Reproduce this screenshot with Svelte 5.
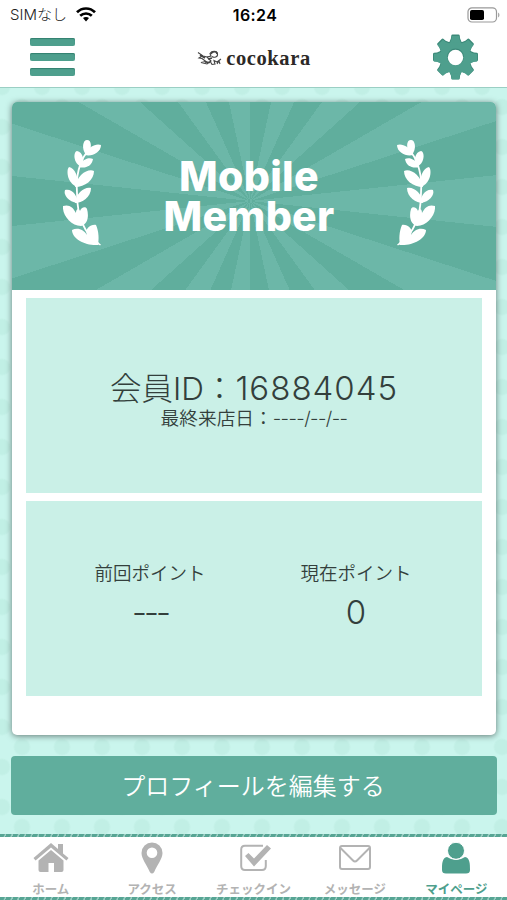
<script lang="ts">
  // 下部タブ
  const tabs = [
    { id: 'home', label: 'ホーム' },
    { id: 'access', label: 'アクセス' },
    { id: 'checkin', label: 'チェックイン' },
    { id: 'message', label: 'メッセージ' },
    { id: 'mypage', label: 'マイページ' },
  ];

  let activeTab = $state('mypage');
  let memberId = $state('16884045');
  let lastVisit = $state('----/--/--');
  let previousPoint = $state('---');
  let currentPoint = $state('0');

  // 歯車の歯の角度
  const teeth = [0, 45, 90, 135, 180, 225, 270, 315];
</script>

{#snippet laurel()}
  <svg class="laurel" viewBox="0 0 39 106" width="39" height="106" fill="#fff">
    <path d="M24 12C15 24 13 39 14 53C14 76 20 93 36 104" fill="none" stroke="#fff" stroke-width="1.8" />
    <path d="M23 15C18 8 20 0 24 0C29 0 29 8 25 15Z" />
    <path d="M22 15C25 6 34 3 38 5C38 12 29 17 22 15Z" />
    <path d="M19 27C10 24 10 12 14 11C20 12 22 21 19 27Z" />
    <path d="M16 27C19 19 26 17 30 19C29 26 22 29 16 27Z" />
    <path d="M14 47C4 43 3 30 6 27C12 28 16 37 14 47Z" />
    <path d="M12 47C14 35 25 28 31 31C31 40 22 47 12 47Z" />
    <path d="M14 63C6 62 0 55 2 50C9 48 15 56 14 63Z" />
    <path d="M12 63C13 53 22 46 28 48C28 57 19 63 12 63Z" />
    <path d="M18 86C8 86-1 75 0 66C6 64 10 67 13 73C13 69 15 68 17 71C18 67 23 66 24 69C26 76 25 84 18 86Z" />
    <path d="M35 105C23 106 9 99 9 90C15 87 21 90 24 95C21 89 28 84 33 85C36 92 36 99 35 105Z" />
    <path d="M33 102L37.5 105" stroke="#fff" stroke-width="1.5" />
  </svg>
{/snippet}

<div class="app">
  <div class="status-bar">
    <div class="carrier">
      <span>SIMなし</span>
      <svg width="20" height="15" viewBox="0 0 20 15" fill="none" stroke="#000" stroke-width="2.7">
        <path d="M1 5.3C6 .2 14 .2 19 5.3" />
        <path d="M4.2 8.8C7.5 5.7 12.5 5.7 15.8 8.8" />
        <path d="M7 11L10 14.4L13 11C11.4 9.6 8.6 9.6 7 11Z" fill="#000" stroke="none" />
      </svg>
    </div>
    <span class="time">16:24</span>
    <svg class="battery" width="33" height="16" viewBox="0 0 33 16">
      <rect x="1" y=".8" width="28.5" height="14.2" rx="4" fill="#fff" stroke="#999" stroke-width="1.2" />
      <rect x="3" y="3" width="14" height="10" rx="1.8" />
      <path d="M31 5.5C33 6.5 33 9.5 31 10.5Z" fill="#aaa" />
    </svg>
  </div>

  <header>
    <button class="menu-btn" aria-label="メニュー">
      <i></i><i></i><i></i>
    </button>
    <div class="logo">
      <svg width="25" height="17" viewBox="0 0 25 17" fill="none" stroke="#444" stroke-width="1.1">
        <path d="M1 2.5L6 6L10 7L14 11L10 14L4 12.5L9 11.5L5 8.5L2 8L5 6" />
        <path d="M10 7L14 6L13 3.5C15 .5 20 .5 20.5 4C21 7 17 8 15 6.5" />
        <path d="M13 11L15 14.5L18 14L17 10.5L20 12L24 9M20 14L22 11L23 14" />
        <path d="M14 4C15 1 20 1 20 4" stroke-width="1.7" />
        <path d="M3 5L8 8M8 12L13 12.5M11 9L15 8" stroke-width="1.6" />
      </svg>
      <span>cocokara</span>
    </div>
    <button class="settings-btn" aria-label="設定">
      <svg width="45" height="46" viewBox="-22.5 -23 45 46">
        <g fill="#3c8979">
          {#each teeth as deg (deg)}
            <path d="M-6.5-14L-4.6-18.5L-4.2-21.5Q-4-22.5-3-22.5H3Q4-22.5 4.2-21.5L4.6-18.5L6.5-14Z" transform="rotate({deg})" />
          {/each}
          <circle r="16" />
        </g>
        <g fill="#4e9f8d" transform="translate(0 .7)">
          {#each teeth as deg (deg)}
            <path d="M-6-14L-4.2-18L-3.8-21.6H3.8L4.2-18L6-14Z" transform="rotate({deg})" />
          {/each}
          <circle r="15.6" />
        </g>
        <circle r="8.4" fill="#3c8979" />
        <circle cy=".5" r="7.7" fill="#fff" />
      </svg>
    </button>
  </header>

  <main>
    <section class="card">
      <div class="banner">
        {@render laurel()}
        <h1>Mobile<br />Member</h1>
        <div class="flip">{@render laurel()}</div>
      </div>
      <div class="panel member">
        <p class="member-id">会員ID：<span>{memberId}</span></p>
        <p class="last-visit">最終来店日：<span>{lastVisit}</span></p>
      </div>
      <div class="panel points">
        <div class="point">
          <span>前回ポイント</span>
          <strong>{previousPoint}</strong>
        </div>
        <div class="point">
          <span>現在ポイント</span>
          <strong>{currentPoint}</strong>
        </div>
      </div>
    </section>

    <button class="edit-btn">プロフィールを編集する</button>
  </main>

  <nav>
    {#each tabs as tab (tab.id)}
      <button class="tab" class:active={activeTab === tab.id} onclick={() => (activeTab = tab.id)}>
        <svg width="36" height="34" viewBox="0 0 36 34" fill="currentColor">
          {#if tab.id === 'home'}
            <path d="M18 1L25 7V2H30V11.5L35.5 16L33.5 18.5L18 5.5L2.5 18.5L.5 16Z" />
            <path d="M18 8L30.5 18.5V28Q30.5 30 28.5 30H21V21H15.5V30H7.5Q5.5 30 5.5 28V18.5Z" />
          {:else if tab.id === 'access'}
            <path
              fill-rule="evenodd"
              d="M18 .5A10.5 10.5 0 0 0 7.5 11C7.5 17 13 23 15.8 30Q18 33 20.2 30C23 23 28.5 17 28.5 11A10.5 10.5 0 0 0 18 .5ZM18 5.5A5.3 5.3 0 1 1 18 16.1A5.3 5.3 0 1 1 18 5.5Z"
            />
          {:else if tab.id === 'checkin'}
            <path d="M27 3.7H9Q5.2 3.7 5.2 7.5V24Q5.2 28 9 28H26Q29.8 28 29.8 24V18" fill="none" stroke="currentColor" stroke-width="2" />
            <path d="M9 14L12.5 11L18 16.5L31 3L35 6.5L18 24.5Z" />
          {:else if tab.id === 'message'}
            <rect x="3" y="4" width="30" height="23" rx="2" fill="none" stroke="currentColor" stroke-width="2" />
            <path d="M3.5 6L16 18.5Q18 20.5 20 18.5L32.5 6" fill="none" stroke="currentColor" stroke-width="2" />
          {:else}
            <path d="M9 15C4 16 4 22 4 28Q4 31.5 8 31.5H28Q32 31.5 32 28C32 22 32 16 27 15Q18 21 9 15Z" />
            <circle cx="18" cy="8.8" r="8.5" stroke="#fff" stroke-width="1" />
          {/if}
        </svg>
        <span>{tab.label}</span>
      </button>
    {/each}
  </nav>
</div>

<style>
  :global(body) {
    margin: 0;
    font-family: Inter, 'Noto Sans CJK JP', sans-serif;
  }

  button {
    padding: 0;
    border: none;
    background: none;
    font-family: inherit;
    cursor: pointer;
  }

  p,
  h1 {
    margin: 0;
  }

  .app {
    width: 507px;
    height: 900px;
    display: flex;
    flex-direction: column;
    overflow: hidden;
    background-color: #caf5ed;
    background-image:
      radial-gradient(circle, #c1efe5 7px, transparent 9px),
      radial-gradient(circle, #c1efe5 7px, transparent 9px);
    background-size: 40px 40px;
    background-position:
      2px 7px,
      -18px 27px;
  }

  .status-bar {
    height: 29px;
    display: grid;
    grid-template-columns: 1fr auto 1fr;
    align-items: center;
    padding: 0 7px 0 10px;
    background: #fff;
    box-sizing: border-box;
    font-size: 15px;
    color: #222;
  }

  .carrier {
    display: flex;
    align-items: center;
    gap: 9px;
    font-weight: 300;
    line-height: 20px;
  }

  .time {
    font-size: 16px;
    font-weight: 600;
    letter-spacing: 0.4px;
    color: #000;
  }

  .battery {
    justify-self: end;
  }

  header {
    height: 53px;
    display: flex;
    justify-content: space-between;
    padding: 5px 29px 0 30px;
    background: #fff;
    border-bottom: 1px solid #9bcfc4;
  }

  .menu-btn {
    width: 45px;
    height: 38px;
    margin-top: 4px;
    display: flex;
    flex-direction: column;
    justify-content: space-between;
  }

  .menu-btn i {
    width: 100%;
    height: 8px;
    border-radius: 2px;
    background: #4e9f8d;
    box-shadow: inset 0 1px 1px #34806f;
  }

  .logo {
    display: flex;
    gap: 4px;
    margin-top: 15px;
    height: 18px;
    align-items: center;
  }

  .logo span {
    font-family: 'Liberation Serif', serif;
    font-size: 20.5px;
    font-weight: 700;
    line-height: 18px;
    letter-spacing: 0.6px;
    color: #2c2927;
  }

  .settings-btn {
    height: 46px;
  }

  main {
    flex: 1;
    padding: 14px 11px 0 12px;
  }

  .card {
    height: 633px;
    display: flex;
    flex-direction: column;
    gap: 8px;
    background: #fff;
    border-radius: 5px;
    box-shadow: 0 1px 6px rgba(0, 0, 0, 0.5);
    overflow: hidden;
  }

  .banner {
    height: 188px;
    display: flex;
    justify-content: space-between;
    padding: 38px 61px 0 51px;
    box-sizing: border-box;
    background: repeating-conic-gradient(from 0deg at 238px 99px, #60ae9d 0 12deg, #6cb7a8 12deg 24deg);
  }

  .laurel {
    display: block;
  }

  .flip {
    transform: scaleX(-1);
    height: 106px;
  }

  h1 {
    margin-top: 16px;
    font-size: 41px;
    line-height: 40px;
    font-weight: 800;
    letter-spacing: 0.3px;
    text-align: center;
    color: #fff;
  }

  .panel {
    height: 195px;
    margin: 0 14px;
    background: #caf0e7;
    color: #333f3c;
    box-sizing: border-box;
  }

  .member {
    padding-top: 71px;
    text-align: center;
    white-space: nowrap;
  }

  .member-id {
    font-size: 31.5px;
    line-height: 38px;
    font-weight: 300;
  }

  .member-id span {
    font-size: 33px;
    letter-spacing: 1px;
  }

  .last-visit {
    font-size: 18.7px;
    line-height: 22px;
    font-weight: 350;
  }

  .last-visit span {
    letter-spacing: -0.6px;
  }

  .points {
    display: flex;
    padding: 58px 23px 0 21px;
  }

  .point {
    flex: 1;
    display: flex;
    flex-direction: column;
    align-items: center;
  }

  .point span {
    font-size: 18.5px;
    line-height: 28px;
    font-weight: 350;
  }

  .point strong {
    margin-top: 5px;
    font-size: 33px;
    line-height: 40px;
    font-weight: 300;
  }

  .point:first-child strong {
    letter-spacing: -3px;
  }

  .edit-btn {
    display: block;
    width: 486px;
    height: 59px;
    margin: 21px 0 0 -1px;
    padding: 0 2px 2px 0;
    border-radius: 4px;
    background: #60ae9d;
    color: #fff;
    font-size: 24px;
    font-weight: 350;
  }

  nav {
    height: 66px;
    display: flex;
    background: #fff;
    position: relative;
    box-sizing: border-box;
  }

  /* 縄模様の罫線 */
  nav::before,
  nav::after {
    content: '';
    position: absolute;
    left: 0;
    right: 0;
    height: 3px;
    background: repeating-linear-gradient(115deg, #57a594 0 4px, #9bcdc2 5px 6px);
  }

  nav::before {
    top: 0;
  }

  nav::after {
    bottom: 0;
  }

  .tab {
    flex: 1;
    display: flex;
    flex-direction: column;
    align-items: center;
    padding-top: 8px;
    color: #b3b3b3;
  }

  .tab span {
    margin-top: 6px;
    font-size: 12.5px;
    line-height: 16px;
    font-weight: 700;
    white-space: nowrap;
  }

  .tab.active {
    color: #4e9f8d;
  }
</style>
